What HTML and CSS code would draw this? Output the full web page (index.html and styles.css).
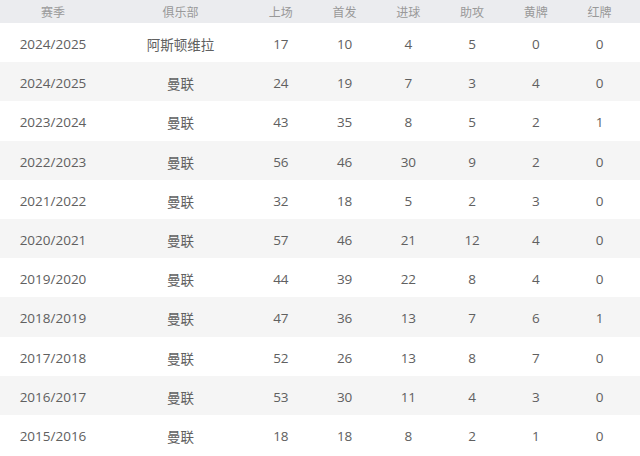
FILE: index.html
```html
<!DOCTYPE html>
<html lang="zh-CN">
<head>
<meta charset="utf-8">
<link rel="stylesheet" href="styles.css">
</head>
<body>
<div class="table">
  <div class="row head">
    <div class="c">赛季</div><div class="c club">俱乐部</div><div class="c">上场</div><div class="c">首发</div><div class="c">进球</div><div class="c">助攻</div><div class="c">黄牌</div><div class="c">红牌</div>
  </div>
  <div class="row"><div class="c">2024/2025</div><div class="c club">阿斯顿维拉</div><div class="c">17</div><div class="c">10</div><div class="c">4</div><div class="c">5</div><div class="c">0</div><div class="c">0</div></div>
  <div class="row alt"><div class="c">2024/2025</div><div class="c club">曼联</div><div class="c">24</div><div class="c">19</div><div class="c">7</div><div class="c">3</div><div class="c">4</div><div class="c">0</div></div>
  <div class="row"><div class="c">2023/2024</div><div class="c club">曼联</div><div class="c">43</div><div class="c">35</div><div class="c">8</div><div class="c">5</div><div class="c">2</div><div class="c">1</div></div>
  <div class="row alt"><div class="c">2022/2023</div><div class="c club">曼联</div><div class="c">56</div><div class="c">46</div><div class="c">30</div><div class="c">9</div><div class="c">2</div><div class="c">0</div></div>
  <div class="row"><div class="c">2021/2022</div><div class="c club">曼联</div><div class="c">32</div><div class="c">18</div><div class="c">5</div><div class="c">2</div><div class="c">3</div><div class="c">0</div></div>
  <div class="row alt"><div class="c">2020/2021</div><div class="c club">曼联</div><div class="c">57</div><div class="c">46</div><div class="c">21</div><div class="c">12</div><div class="c">4</div><div class="c">0</div></div>
  <div class="row"><div class="c">2019/2020</div><div class="c club">曼联</div><div class="c">44</div><div class="c">39</div><div class="c">22</div><div class="c">8</div><div class="c">4</div><div class="c">0</div></div>
  <div class="row alt"><div class="c">2018/2019</div><div class="c club">曼联</div><div class="c">47</div><div class="c">36</div><div class="c">13</div><div class="c">7</div><div class="c">6</div><div class="c">1</div></div>
  <div class="row"><div class="c">2017/2018</div><div class="c club">曼联</div><div class="c">52</div><div class="c">26</div><div class="c">13</div><div class="c">8</div><div class="c">7</div><div class="c">0</div></div>
  <div class="row alt"><div class="c">2016/2017</div><div class="c club">曼联</div><div class="c">53</div><div class="c">30</div><div class="c">11</div><div class="c">4</div><div class="c">3</div><div class="c">0</div></div>
  <div class="row"><div class="c">2015/2016</div><div class="c club">曼联</div><div class="c">18</div><div class="c">18</div><div class="c">8</div><div class="c">2</div><div class="c">1</div><div class="c">0</div></div>
</div>
</body>
</html>
```
FILE: styles.css
```css
html, body {
  margin: 0;
  padding: 0;
  background: #ffffff;
}
body {
  font-family: "Open Sans", "Noto Sans CJK SC", sans-serif;
  color: #606060;
  width: 640px;
  height: 456px;
  overflow: hidden;
}
.table {
  display: flex;
  flex-direction: column;
}
.row {
  display: grid;
  grid-template-columns: 106px 143px repeat(6, 63.75px) 8.5px;
  height: 39.2px;
  box-sizing: border-box;
  padding-top: 3px;
  align-items: center;
  font-size: 13.5px;
}
.row.alt {
  background: #f5f5f5;
}
.row.head {
  height: 23px;
  padding-top: 0;
  background: #ebecef;
  color: #999999;
  font-size: 12px;
}
.c {
  text-align: center;
  white-space: nowrap;
}
.club {
  padding-left: 6px;
}
```
